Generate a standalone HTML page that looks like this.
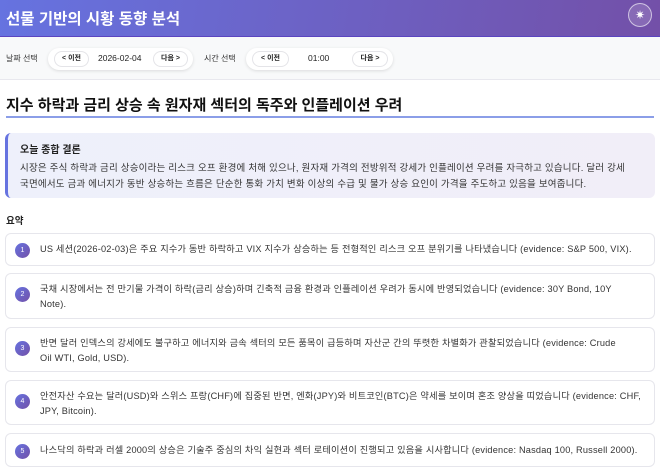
<!DOCTYPE html>
<html><head><meta charset="utf-8"><style>
*{box-sizing:border-box;margin:0;padding:0}
body{width:660px;height:474px;overflow:hidden;background:#fff;font-family:"Liberation Sans","Noto Sans CJK KR",sans-serif;color:#222}
.hdr{height:37px;background:linear-gradient(100deg,#6673e0,#7350a8);position:relative;border-bottom:1px solid #5b45c0}
.hdr h1{position:absolute;left:6px;top:7px;font-size:15.5px;color:#fff;font-weight:bold}
.sun{position:absolute;right:8px;top:3px;width:24px;height:24px;border-radius:50%;border:1px solid rgba(255,255,255,.6);background:rgba(255,255,255,.15);color:#fff;font-size:12px;text-align:center;line-height:22px}
.bar{height:43px;background:#f8f9fa;border-bottom:1px solid #e8e8ee;position:relative;font-size:8px}
.lbl{position:absolute;top:16px;color:#333}
.grp{position:absolute;top:11px;height:22px;background:#fff;border-radius:11px;box-shadow:0 1px 3px rgba(0,0,0,.12)}
.btn{position:absolute;top:3px;height:16px;border:1px solid #e4e4e8;border-radius:8px;font-size:7px;line-height:14px;text-align:center;font-weight:bold;background:#fff}
.val{position:absolute;top:5px;font-size:8.5px}
.title{position:absolute;left:6px;top:94px;font-size:15px;font-weight:bold;color:#111}
.uline{position:absolute;left:6px;top:116px;width:648px;height:2px;background:#8b9ee8}
.box{position:absolute;left:5px;top:133px;width:650px;height:65px;border-left:3px solid #6673e0;border-radius:6px;background:linear-gradient(90deg,#eef0fb,#f1eef8)}
.box h3{position:absolute;left:12px;top:8px;font-size:10px;font-weight:bold}
.box p{position:absolute;left:12px;top:28px;font-size:9.5px;letter-spacing:0.2px;line-height:16px;color:#333;width:612px}
.sum{position:absolute;left:6px;top:213px;font-size:9.5px;font-weight:bold}
.card{position:absolute;left:5px;width:650px;border:1px solid #e6e6ec;border-radius:6px;background:#fff;font-size:9.2px;letter-spacing:0.2px;line-height:15px;color:#333;padding:0 20px 0 34px}
.n{position:absolute;left:9px;width:15px;height:15px;border-radius:50%;background:linear-gradient(135deg,#6673e0,#7350a8);color:#fff;font-size:7px;line-height:15px;text-align:center;letter-spacing:0}
</style></head><body>
<div class="hdr"><h1>선물 기반의 시황 동향 분석</h1><div class="sun">✷</div></div>
<div class="bar">
<span class="lbl" style="left:6px">날짜 선택</span>
<div class="grp" style="left:48px;width:145px"><div class="btn" style="left:6px;width:35px">&lt; 이전</div><span class="val" style="left:50px">2026-02-04</span><div class="btn" style="left:105px;width:35px">다음 &gt;</div></div>
<span class="lbl" style="left:204px">시간 선택</span>
<div class="grp" style="left:246px;width:147px"><div class="btn" style="left:6px;width:37px">&lt; 이전</div><span class="val" style="left:62px">01:00</span><div class="btn" style="left:106px;width:36px">다음 &gt;</div></div>
</div>
<div class="title">지수 하락과 금리 상승 속 원자재 섹터의 독주와 인플레이션 우려</div>
<div class="uline"></div>
<div class="box"><h3>오늘 종합 결론</h3><p>시장은 주식 하락과 금리 상승이라는 리스크 오프 환경에 처해 있으나, 원자재 가격의 전방위적 강세가 인플레이션 우려를 자극하고 있습니다. 달러 강세 국면에서도 금과 에너지가 동반 상승하는 흐름은 단순한 통화 가치 변화 이상의 수급 및 물가 상승 요인이 가격을 주도하고 있음을 보여줍니다.</p></div>
<div class="sum">요약</div>
<div class="card" style="top:233px;height:33px;padding-top:8px;padding-right:8px"><span class="n" style="top:9px">1</span>US 세션(2026-02-03)은 주요 지수가 동반 하락하고 VIX 지수가 상승하는 등 전형적인 리스크 오프 분위기를 나타냈습니다 (evidence: S&amp;P 500, VIX).</div>
<div class="card" style="top:273px;height:46px;padding-top:8px"><span class="n" style="top:13px">2</span>국채 시장에서는 전 만기물 가격이 하락(금리 상승)하며 긴축적 금융 환경과 인플레이션 우려가 동시에 반영되었습니다 (evidence: 30Y Bond, 10Y Note).</div>
<div class="card" style="top:327px;height:45px;padding-top:8px;padding-right:30px"><span class="n" style="top:13px">3</span>반면 달러 인덱스의 강세에도 불구하고 에너지와 금속 섹터의 모든 품목이 급등하며 자산군 간의 뚜렷한 차별화가 관찰되었습니다 (evidence: Crude Oil WTI, Gold, USD).</div>
<div class="card" style="top:380px;height:45px;padding-top:8px;padding-right:8px"><span class="n" style="top:13px">4</span>안전자산 수요는 달러(USD)와 스위스 프랑(CHF)에 집중된 반면, 엔화(JPY)와 비트코인(BTC)은 약세를 보이며 혼조 양상을 띠었습니다 (evidence: CHF, JPY, Bitcoin).</div>
<div class="card" style="top:433px;height:34px;padding-top:9px;padding-right:8px"><span class="n" style="top:10px">5</span>나스닥의 하락과 러셀 2000의 상승은 기술주 중심의 차익 실현과 섹터 로테이션이 진행되고 있음을 시사합니다 (evidence: Nasdaq 100, Russell 2000).</div>
</body></html>
